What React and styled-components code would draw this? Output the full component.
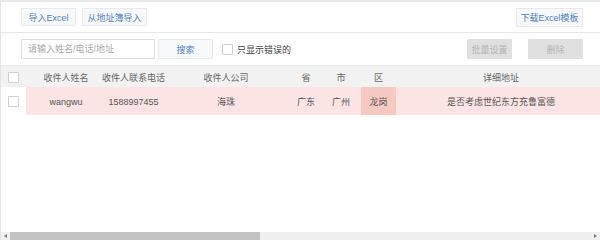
import React from 'react';
import styled, { createGlobalStyle } from 'styled-components';

const Global = createGlobalStyle`
  html, body { margin: 0; padding: 0; width: 600px; height: 240px; overflow: hidden; background: #fff; }
  body { font-family: "Liberation Sans", "Noto Sans CJK SC", sans-serif; font-size: 9px; color: #555; }
  * { box-sizing: border-box; }
`;

const Page = styled.div`
  width: 600px;
  height: 240px;
  border-top: 2px solid #e8e8e8;
  border-left: 1px solid #e4e4e4;
  display: flex;
  flex-direction: column;
`;

const Bar = styled.div`
  height: ${p => p.$h}px;
  flex: none;
  display: flex;
  align-items: center;
  gap: ${p => p.$gap || 6}px;
  padding: 0 17px 0 20px;
  border-bottom: 1px solid #e8e8e8;
`;

const Spacer = styled.div`flex: 1;`;

const Btn = styled.button`
  height: ${p => p.$h || 18}px;
  width: ${p => p.$w}px;
  margin-left: ${p => p.$ml || 0}px;
  padding: 0;
  font: inherit;
  font-size: 9px;
  border-radius: 1px;
  cursor: pointer;
  border: 1px solid ${p => (p.$disabled ? '#e0e0e0' : '#e6e9ee')};
  background: ${p => (p.$disabled ? '#e0e0e0' : '#f8f9fb')};
  color: ${p => (p.$disabled ? '#b5b5b5' : '#4f7fbf')};
`;

const Input = styled.input`
  width: 134px;
  height: 20px;
  border: 1px solid #dcdcdc;
  padding: 0 6px;
  font: inherit;
  font-size: 9px;
  color: #555;
  outline: none;
  &::placeholder { color: #a9a9a9; }
`;

const Check = styled.span`
  display: inline-block;
  width: 11px;
  height: 11px;
  border: 1px solid #cfcfcf;
  background: #fff;
  border-radius: 1px;
`;

const CheckLabel = styled.label`
  display: flex;
  align-items: center;
  gap: 4px;
  margin-left: 6px;
  color: #444;
`;

const TableArea = styled.div`
  flex: 1;
  overflow: hidden;
`;

const cols = '25px 80px 55px 130px 30px 40px 35px 210px 785px';

const Row = styled.div`
  display: grid;
  grid-template-columns: ${cols};
  height: ${p => p.$h}px;
  align-items: stretch;
  background: ${p => p.$bg};
`;

const Cell = styled.div`
  display: flex;
  align-items: center;
  justify-content: center;
  white-space: nowrap;
  padding-top: 1px;
  color: ${p => (p.$head ? '#666' : '#555')};
  background: ${p => p.$bg || 'transparent'};
`;

const ScrollBar = styled.div`
  flex: none;
  height: 8px;
  display: flex;
  align-items: stretch;
  background: #f0f0f0;
`;

const Arrow = styled.div`
  width: 9px;
  flex: none;
  display: flex;
  align-items: center;
  justify-content: center;
  &::after {
    content: '';
    width: 0;
    height: 0;
    border-top: 2px solid transparent;
    border-bottom: 2px solid transparent;
    ${p => (p.$dir === 'left' ? 'border-right: 3px solid #777;' : 'border-left: 3px solid #777;')}
  }
`;

const Track = styled.div`
  flex: 1;
  display: flex;
  align-items: stretch;
`;

const Thumb = styled.div`
  background: #c3c3c3;
  height: 100%;
`;

const HEAD_BG = '#f2f2f2';
const ROW_BG = '#fde4e4';
const HI_BG = '#f8c8c3';

const headers = ['收件人姓名', '收件人联系电话', '收件人公司', '省', '市', '区', '详细地址', ''];
const data = ['wangwu', '1588997455', '海珠', '广东', '广州', '龙岗', '是否考虑世纪东方充鲁富德', ''];

export default function App() {
  const visibleRatio = 0.431;
  return (
    <>
      <Global />
      <Page>
        <Bar $h={31}>
          <Btn $w={55}>导入Excel</Btn>
          <Btn $w={65}>从地址簿导入</Btn>
          <Spacer />
          <Btn $w={67} $h={19}>下载Excel模板</Btn>
        </Bar>
        <Bar $h={33} $gap={3}>
          <Input placeholder="请输入姓名/电话/地址" />
          <Btn $w={55} $h={20}>搜索</Btn>
          <CheckLabel>
            <Check />
            只显示错误的
          </CheckLabel>
          <Spacer />
          <Btn $w={45} $h={20} $disabled>批量设置</Btn>
          <Btn $w={55} $h={20} $ml={13} $disabled>删除</Btn>
        </Bar>
        <TableArea>
          <Row $h={21} $bg={HEAD_BG}>
            <Cell $head><Check /></Cell>
            {headers.map((h, i) => (
              <Cell key={i} $head>{h}</Cell>
            ))}
          </Row>
          <Row $h={28} $bg={ROW_BG}>
            <Cell $bg="#fff"><Check /></Cell>
            {data.map((d, i) => (
              <Cell key={i} $bg={i === 5 ? HI_BG : undefined}>{d}</Cell>
            ))}
          </Row>
        </TableArea>
        <ScrollBar>
          <Arrow $dir="left" />
          <Track>
            <Thumb style={{ width: `${visibleRatio * 100}%` }} />
          </Track>
          <Arrow $dir="right" />
        </ScrollBar>
      </Page>
    </>
  );
}
